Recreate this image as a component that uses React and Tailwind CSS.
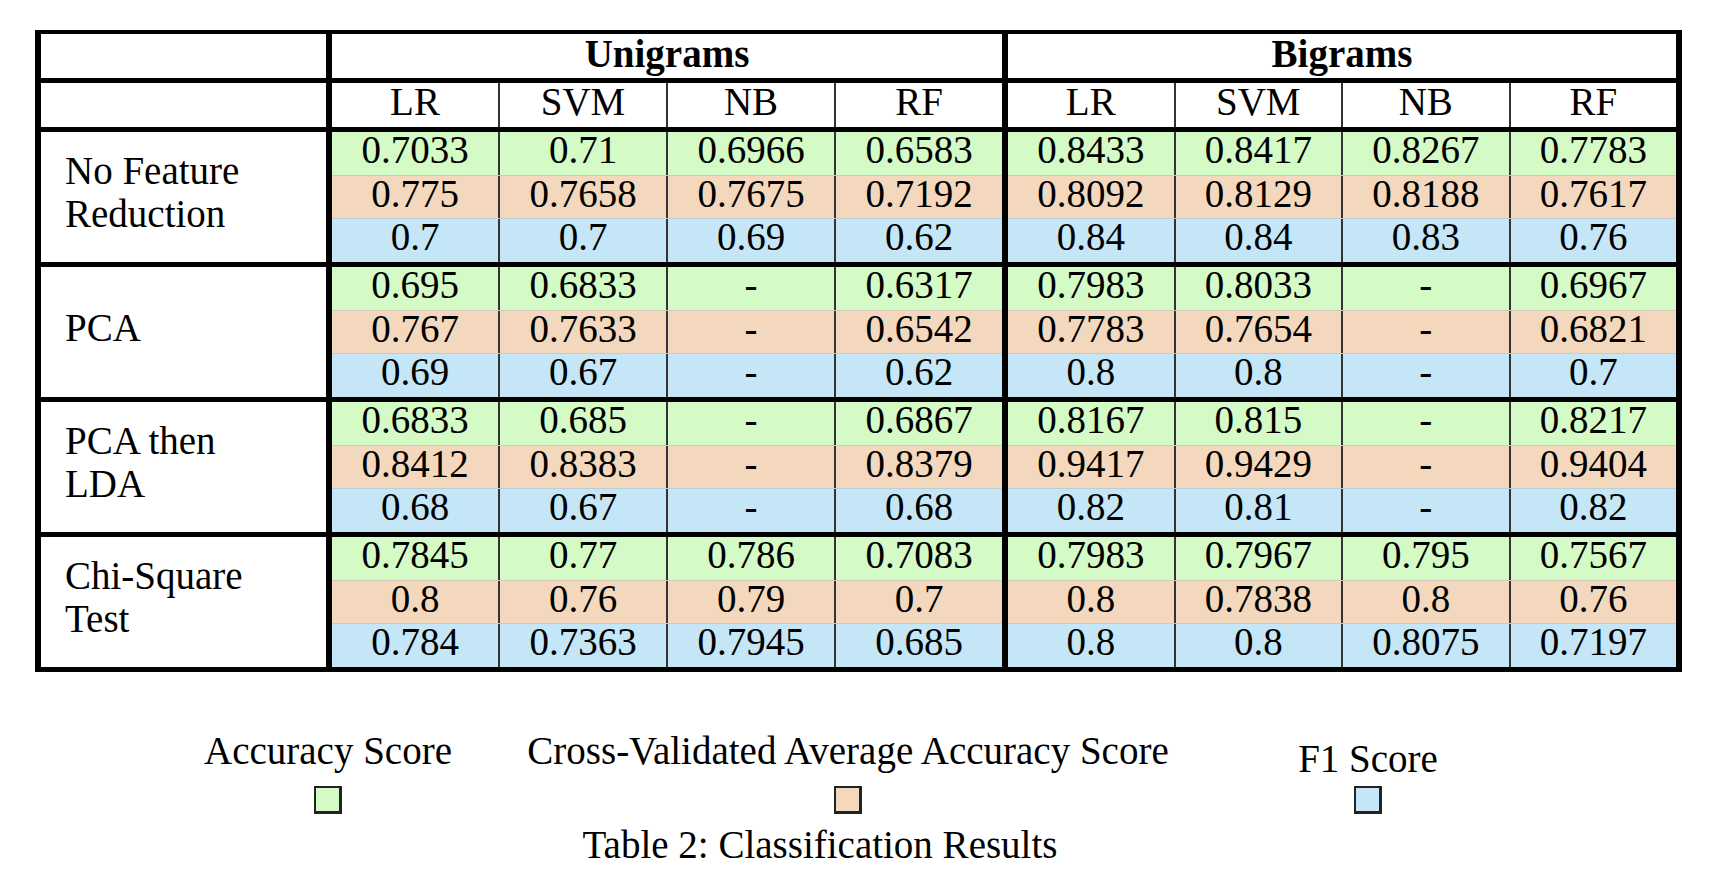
const GROUPS = [
  {
    label: ['No Feature', 'Reduction'],
    rows: [
      ['0.7033', '0.71', '0.6966', '0.6583', '0.8433', '0.8417', '0.8267', '0.7783'],
      ['0.775', '0.7658', '0.7675', '0.7192', '0.8092', '0.8129', '0.8188', '0.7617'],
      ['0.7', '0.7', '0.69', '0.62', '0.84', '0.84', '0.83', '0.76'],
    ],
  },
  {
    label: ['PCA'],
    rows: [
      ['0.695', '0.6833', '-', '0.6317', '0.7983', '0.8033', '-', '0.6967'],
      ['0.767', '0.7633', '-', '0.6542', '0.7783', '0.7654', '-', '0.6821'],
      ['0.69', '0.67', '-', '0.62', '0.8', '0.8', '-', '0.7'],
    ],
  },
  {
    label: ['PCA then', 'LDA'],
    rows: [
      ['0.6833', '0.685', '-', '0.6867', '0.8167', '0.815', '-', '0.8217'],
      ['0.8412', '0.8383', '-', '0.8379', '0.9417', '0.9429', '-', '0.9404'],
      ['0.68', '0.67', '-', '0.68', '0.82', '0.81', '-', '0.82'],
    ],
  },
  {
    label: ['Chi-Square', 'Test'],
    rows: [
      ['0.7845', '0.77', '0.786', '0.7083', '0.7983', '0.7967', '0.795', '0.7567'],
      ['0.8', '0.76', '0.79', '0.7', '0.8', '0.7838', '0.8', '0.76'],
      ['0.784', '0.7363', '0.7945', '0.685', '0.8', '0.8', '0.8075', '0.7197'],
    ],
  },
]

const MODELS = ['LR', 'SVM', 'NB', 'RF']
const ROW_BG = ['bg-[#d4fac6]', 'bg-[#f4d8bd]', 'bg-[#c4e6f6]']
const ROW_H = ['h-[43px]', 'h-[43px] border-t border-[#b5b5b5]/50', 'h-[44px] border-t border-[#b5b5b5]/50']

function Cells({ values, className = '' }) {
  return (
    <div className="flex flex-1">
      {values.map((v, i) => (
        <div
          key={i}
          className={`flex-1 flex items-center justify-center ${i > 0 ? 'border-l-2 border-[#333]' : ''} ${className}`}
        >
          {v}
        </div>
      ))}
    </div>
  )
}

function Section({ children, last }) {
  return (
    <div className={`flex ${last ? 'flex-1' : 'w-[676px] border-r-[6px] border-black'}`}>
      {children}
    </div>
  )
}

function Group({ group, last }) {
  return (
    <div className={`flex h-[130px] ${last ? '' : 'border-b-[5px] border-black box-content'}`}>
      <div className="w-[291px] border-r-[6px] border-black flex flex-col justify-center pl-[24px] pb-[10px] leading-[43px]">
        {group.label.map((l) => (
          <span key={l}>{l}</span>
        ))}
      </div>
      {[0, 1].map((s) => (
        <Section key={s} last={s === 1}>
          <div className="flex flex-col flex-1">
            {group.rows.map((r, ri) => (
              <div key={ri} className={`flex ${ROW_H[ri]} ${ROW_BG[ri]}`}>
                <Cells values={r.slice(s * 4, s * 4 + 4)} className="pb-[8px]" />
              </div>
            ))}
          </div>
        </Section>
      ))}
    </div>
  )
}

export default function App() {
  return (
    <div className="w-[1732px] h-[882px] bg-white text-black font-['Liberation_Serif','Times_New_Roman',serif] text-[39px] leading-none pt-[30px] pl-[35px]">
      <div className="w-[1647px] border-t-4 border-b-[5px] border-x-[6px] border-black">
        <div className="flex h-[44px] border-b-[5px] border-black box-content">
          <div className="w-[291px] border-r-[6px] border-black" />
          <Section>
            <div className="flex-1 flex items-center justify-center font-bold pb-[6px]">Unigrams</div>
          </Section>
          <Section last>
            <div className="flex-1 flex items-center justify-center font-bold pb-[6px]">Bigrams</div>
          </Section>
        </div>
        <div className="flex h-[44px] border-b-[5px] border-black box-content">
          <div className="w-[291px] border-r-[6px] border-black" />
          <Section>
            <Cells values={MODELS} className="pb-[7px]" />
          </Section>
          <Section last>
            <Cells values={MODELS} className="pb-[7px]" />
          </Section>
        </div>
        {GROUPS.map((g, i) => (
          <Group key={i} group={g} last={i === GROUPS.length - 1} />
        ))}
      </div>

      <div className="flex pl-[33px] mt-[56px]">
        <LegendItem label="Accuracy Score" color="bg-[#d4fac6]" />
        <LegendItem label="Cross-Validated Average Accuracy Score" color="bg-[#f4d8bd]" />
        <LegendItem label="F1 Score" color="bg-[#c4e6f6]" shift />
      </div>
      <div className="w-[1570px] text-center mt-[8px] leading-[46px]">Table 2: Classification Results</div>
    </div>
  )
}

function LegendItem({ label, color, shift }) {
  return (
    <div className="w-[520px] flex flex-col items-center">
      <div className={`h-[45px] whitespace-nowrap leading-[45px] ${shift ? 'pt-[8px]' : ''}`}>{label}</div>
      <div className={`mt-[13px] w-[28px] h-[28px] border-2 border-b-[3px] border-r-[3px] border-[#222] ${color}`} />
    </div>
  )
}
